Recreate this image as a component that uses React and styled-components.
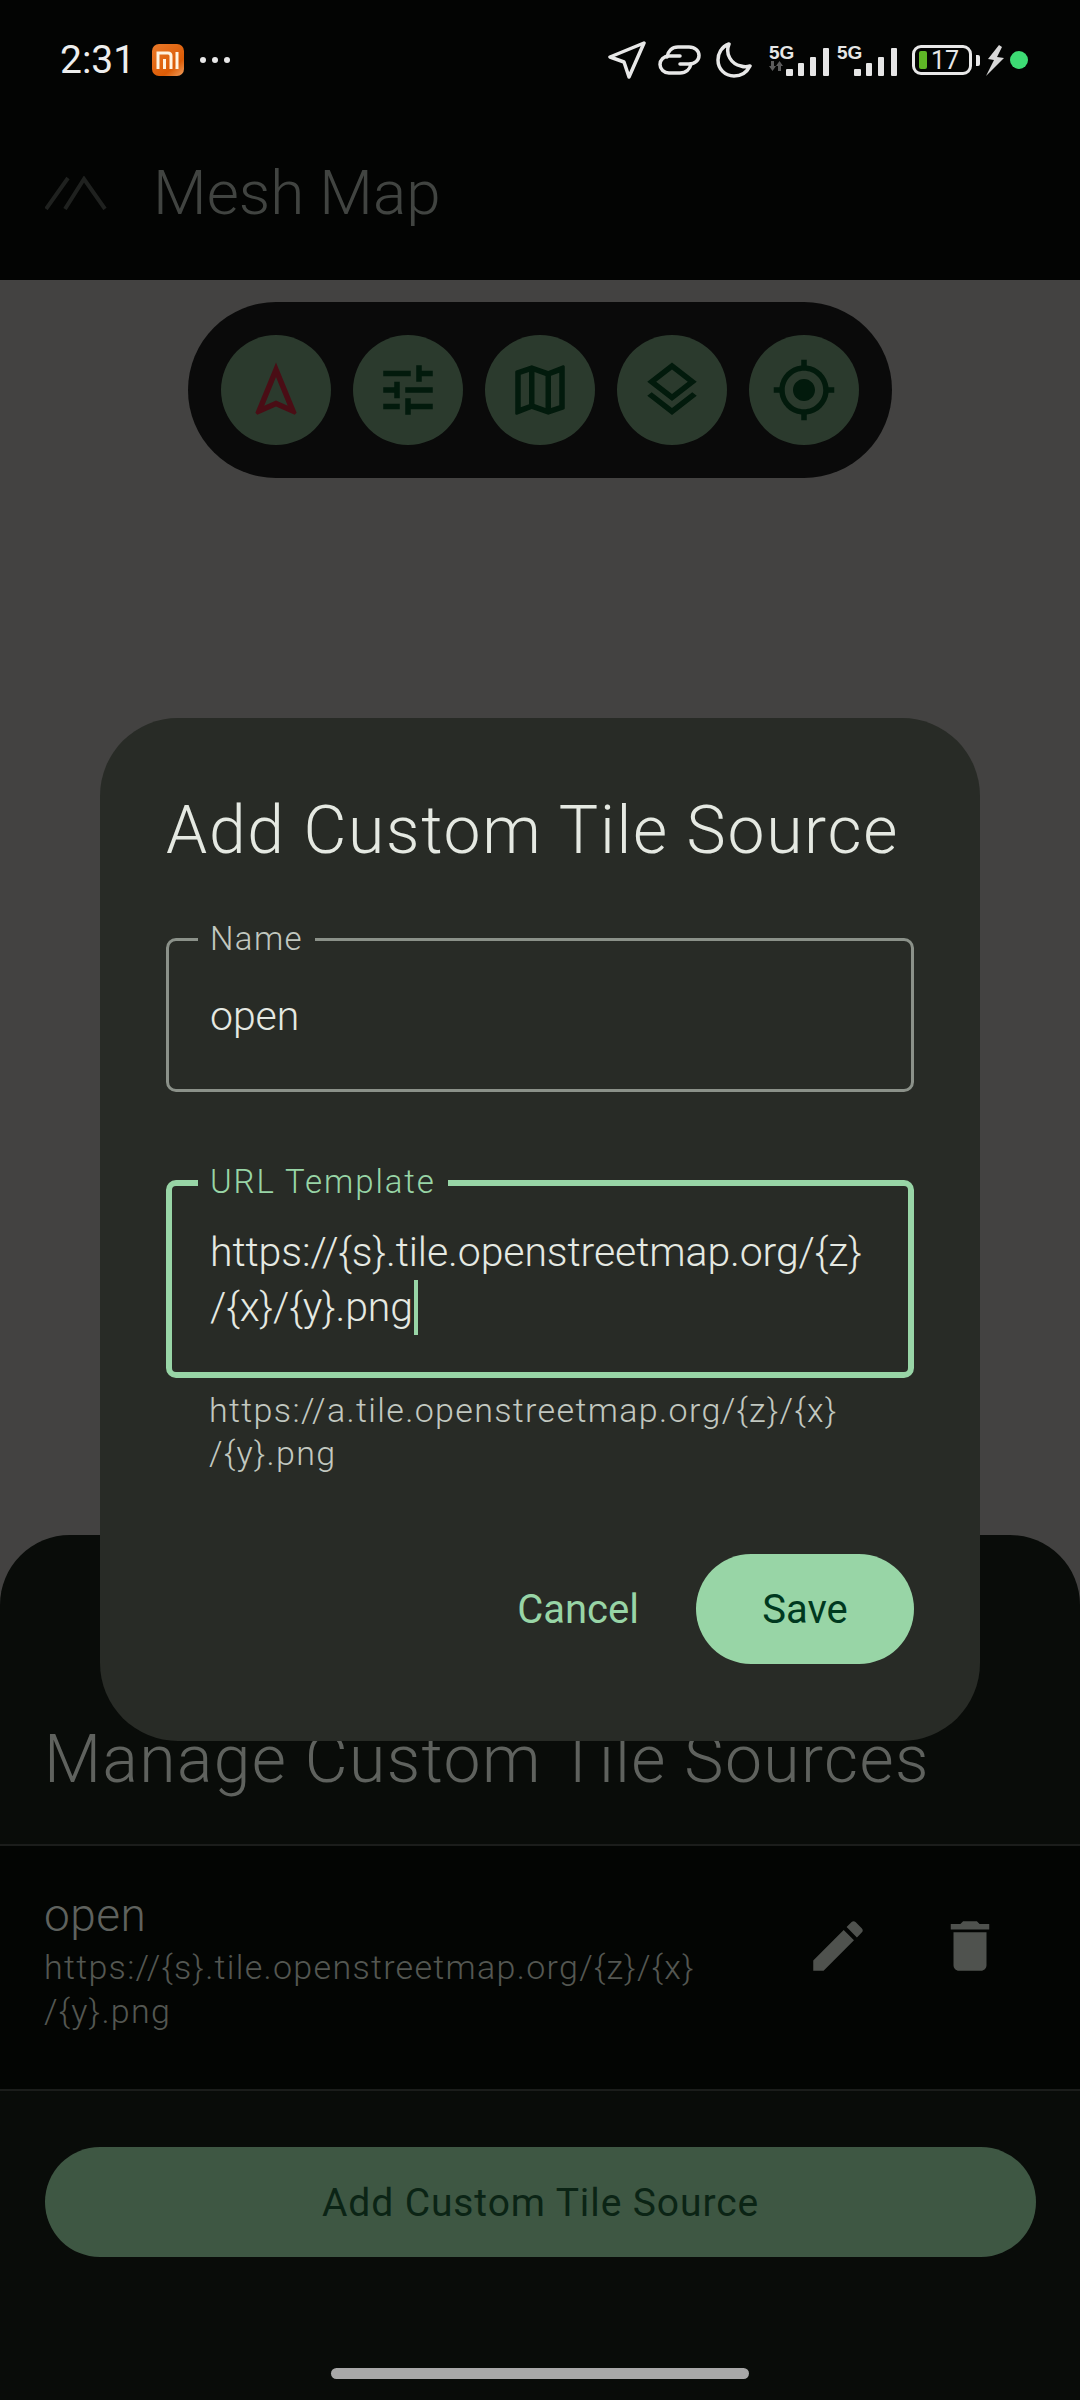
import React from 'react'
import styled, { createGlobalStyle } from 'styled-components'

const GlobalStyle = createGlobalStyle`
    html, body {
        margin: 0;
        padding: 0;
        background: #434241;
    }
    * {
        box-sizing: border-box;
    }
`

const Page = styled.div`
    position: relative;
    width: 1080px;
    height: 2400px;
    display: flex;
    flex-direction: column;
    overflow: hidden;
    font-family: Roboto, "Noto Sans", sans-serif;
    font-weight: 300;
    background: #434241;
`

const Header = styled.header`
    height: 280px;
    background: #030403;
    display: flex;
    flex-direction: column;
`

const StatusBar = styled.div`
    height: 120px;
    display: flex;
    align-items: center;
    justify-content: space-between;
    padding: 0 52px 0 60px;
`

const StatusLeft = styled.div`
    display: flex;
    align-items: center;
`

const Clock = styled.span`
    font-size: 39px;
    font-weight: 400;
    color: #eeeeee;
    margin-right: 17px;
`

const MiBadge = styled.span`
    width: 32px;
    height: 32px;
    border-radius: 7px;
    background: linear-gradient(140deg, #e9792a, #dc5c06 70%, #f0a060);
    display: flex;
    align-items: center;
    justify-content: center;
`

const Dots = styled.div`
    display: flex;
    gap: 6px;
    margin-left: 16px;
`

const Dot = styled.span`
    width: 6px;
    height: 6px;
    border-radius: 50%;
    background: #e8e8e8;
`

const StatusRight = styled.div`
    display: flex;
    align-items: center;
`

const Spacer = styled.span`
    width: ${p => p.$w}px;
`

const SignalGroup = styled.div`
    display: flex;
    align-items: flex-end;
    height: 32px;
    margin-left: ${p => p.$gap}px;
`

const SignalLabel = styled.div`
    width: 30px;
    height: 32px;
    display: flex;
    flex-direction: column;
    font-family: "Liberation Sans", sans-serif;
    font-size: 19px;
    font-weight: 700;
    line-height: 17px;
    color: #e6e6e6;
    margin-right: -13px;
`

const Battery = styled.div`
    width: 60px;
    height: 30px;
    margin-left: 14px;
    border: 3px solid #e8e8e8;
    border-radius: 9px;
    display: flex;
    align-items: center;
    padding-left: 4px;
`

const BatteryFill = styled.span`
    width: 8px;
    height: 18px;
    border-radius: 2px;
    background: #5fb526;
`

const BatteryText = styled.span`
    margin-left: 4px;
    font-size: 25px;
    font-weight: 400;
    color: #e8e8e8;
`

const BatteryNub = styled.span`
    width: 4px;
    height: 11px;
    margin-left: 4px;
    border-radius: 0 2px 2px 0;
    background: #e8e8e8;
`

const GreenDot = styled.span`
    width: 18px;
    height: 18px;
    margin-left: 6px;
    border-radius: 50%;
    background: #3ddc74;
`

const TopBar = styled.div`
    flex: 1;
    display: flex;
    align-items: center;
    padding: 0 0 15px 45px;
`

const AppTitle = styled.h1`
    margin: 0 0 0 45px;
    font-size: 62px;
    font-weight: 300;
    color: #414441;
`

const MapArea = styled.div`
    flex: 1;
    display: flex;
    justify-content: center;
    padding-top: 22px;
`

const Toolbar = styled.div`
    width: 704px;
    height: 176px;
    border-radius: 88px;
    background: #0a0a0a;
    display: flex;
    align-items: center;
    justify-content: center;
    gap: 22px;
`

const ToolButton = styled.div`
    width: 110px;
    height: 110px;
    border-radius: 50%;
    background: #2b3a2d;
    display: flex;
    align-items: center;
    justify-content: center;
    color: ${p => p.$color || '#021a0c'};
`

const Sheet = styled.section`
    height: 865px;
    border-radius: 70px 70px 0 0;
    background: #090c09;
    display: flex;
    flex-direction: column;
`

const SheetTitle = styled.h2`
    height: 311px;
    margin: 0;
    padding: 186px 0 0 44px;
    font-size: 66px;
    font-weight: 300;
    line-height: 78px;
    letter-spacing: 1.4px;
    color: #5f625e;
    border-bottom: 2px solid #1b1d1b;
`

const SourceRow = styled.div`
    height: 245px;
    padding: 34px 44px 0 44px;
    display: flex;
    align-items: flex-start;
    background: #030503;
    border-bottom: 2px solid #1b1d1b;
`

const SourceText = styled.div`
    flex: 1;
    padding-top: 6px;
`

const SourceName = styled.div`
    font-size: 46px;
    line-height: 59px;
    letter-spacing: 0.5px;
    color: #5f625e;
`

const SourceUrl = styled.div`
    font-size: 34px;
    line-height: 44px;
    letter-spacing: 1.3px;
    color: #545752;
`

const RowIcon = styled.div`
    width: 132px;
    height: 132px;
    display: flex;
    align-items: center;
    justify-content: center;
    color: #4f524e;
`

const AddButton = styled.div`
    height: 110px;
    margin: 56px 44px 0 45px;
    padding-top: 2px;
    border-radius: 55px;
    background: #3e5743;
    display: flex;
    align-items: center;
    justify-content: center;
    font-size: 39px;
    font-weight: 400;
    letter-spacing: 0.9px;
    color: #0b2415;
`

const HomeBar = styled.div`
    width: 418px;
    height: 11px;
    margin: 111px auto 0;
    border-radius: 6px;
    background: #a8a8a8;
`

const Dialog = styled.div`
    position: absolute;
    left: 100px;
    top: 718px;
    width: 880px;
    height: 1023px;
    padding: 69px 66px 0;
    border-radius: 78px;
    background: #282b26;
    display: flex;
    flex-direction: column;
`

const DialogTitle = styled.h2`
    margin: 0 0 63px;
    font-size: 66px;
    font-weight: 300;
    line-height: 88px;
    letter-spacing: 1.7px;
    color: #e5e9e2;
`

const Field = styled.div`
    position: relative;
    height: ${p => p.$height}px;
    margin-bottom: ${p => p.$gap}px;
    padding: ${p => p.$pad}px ${p => (p.$focused ? 38 : 41)}px 0;
    border: ${p => (p.$focused ? '6px solid #98d5a6' : '3px solid #8b9189')};
    border-radius: 10px;
    font-size: 41px;
    line-height: 55px;
    letter-spacing: -0.1px;
    color: #e5e9e2;
`

const FieldLabel = styled.span`
    position: absolute;
    left: ${p => (p.$focused ? 26 : 29)}px;
    top: ${p => (p.$focused ? -24 : -22)}px;
    padding: 0 12px;
    background: #282b26;
    font-size: 33px;
    line-height: 40px;
    letter-spacing: ${p => (p.$focused ? 1.9 : 1.4)}px;
    color: ${p => (p.$focused ? '#98d5a6' : '#c2c8c0')};
`

const Caret = styled.span`
    display: inline-block;
    width: 4px;
    height: 55px;
    margin-left: 1px;
    vertical-align: -14px;
    background: #98d5a6;
`

const Helper = styled.div`
    padding: 0 0 0 43px;
    margin-top: -77px;
    font-size: 34px;
    line-height: 43px;
    letter-spacing: 1.35px;
    color: #c2c8c0;
`

const Actions = styled.div`
    display: flex;
    align-items: center;
    justify-content: flex-end;
    margin-top: 79px;
`

const TextButton = styled.div`
    margin-right: 57px;
    font-size: 40px;
    font-weight: 400;
    color: #98d5a6;
`

const SaveButton = styled.div`
    width: 218px;
    height: 110px;
    border-radius: 55px;
    background: #98d5a6;
    display: flex;
    align-items: center;
    justify-content: center;
    font-size: 40px;
    font-weight: 400;
    color: #00391f;
`

const Mi = () => (
    <svg width="24" height="18" viewBox="0 0 24 18" fill="none" stroke="#fff3e0" strokeWidth="3">
        <path d="M2 18V2h10q3 0 3 3v13M8.500 8v10M21 1v17" />
    </svg>
)

const Arrow = () => (
    <svg width="38" height="38" viewBox="0 0 38 38" fill="none" stroke="#e8e8e8" strokeWidth="3.500" strokeLinejoin="round">
        <path d="M36 2L2 16l14 5 5 15z" />
    </svg>
)

const ChainLink = () => (
    <svg width="44" height="30" viewBox="0 0 44 30" fill="none" stroke="#e8e8e8" strokeWidth="3.500" strokeLinecap="round">
        <path d="M9 12C10 6 14 2 20 2h11c6 0 10 4 10 8.500s-4 8.500-10 8.500h-9" />
        <path d="M22 11H11c-5 0-9 4-9 8.500S6 28 11 28h11c6 0 10-4 11-9" />
    </svg>
)

const Moon = () => (
    <svg width="36" height="36" viewBox="0 0 36 36" fill="none" stroke="#e8e8e8" strokeWidth="3.500" strokeLinejoin="round">
        <path d="M13 2C5 5 2 12 2 18c0 9 7 16 16 16 7 0 13-4 16-10-3 1-6 1-9 0C15 22 9 12 13 2z" />
    </svg>
)

const Bars = () => (
    <svg width="44" height="28" viewBox="0 0 44 28" fill="#e6e6e6">
        <rect x="0" y="21" width="7" height="7" rx="1" />
        <rect x="12" y="15" width="6" height="13" rx="1" />
        <rect x="24" y="9" width="6" height="19" rx="1" />
        <rect x="37" y="0" width="6" height="28" rx="1" />
    </svg>
)

const TransferArrows = () => (
    <svg width="14" height="10" viewBox="0 0 14 10" fill="#5c5c5c">
        <path d="M2 0h3v5h2l-3.500 5L0 5h2zM9 10h3V5h2l-3.500-5L7 5h2z" />
    </svg>
)

const Bolt = () => (
    <svg width="18" height="31" viewBox="0 0 18 31" fill="#d8d8d8">
        <path d="M13 0L2 14l6 1-8 16 18-18-7-1 5-10z" />
    </svg>
)

const Logo = () => (
    <svg width="63" height="34" viewBox="0 0 63 34" fill="none" stroke="#1f211f" strokeWidth="4">
        <path d="M1 33L23 2M20 33L39 3l21 30" />
    </svg>
)

const Icon = ({ d }) => (
    <svg width="66" height="66" viewBox="0 0 24 24" fill="currentColor">
        <path d={d} />
    </svg>
)

const icons = {
    navigation: 'M12 7.270l4.280 10.430-3.470-1.530-.81-.36-.81.36-3.470 1.530L12 7.270M12 2L4.500 20.290l.71.71L12 18l6.790 3 .71-.71L12 2z',
    tune: 'M3 17v2h6v-2H3zM3 5v2h10V5H3zm10 16v-2h8v-2h-8v-2h-2v6h2zM7 9v2H3v2h4v2h2V9H7zm14 4v-2H11v2h10zm-6-4h2V7h4V5h-4V3h-2v6z',
    map: 'M20.500 3l-.16.03L15 5.100 9 3 3.360 4.900c-.21.07-.36.25-.36.48V20.500c0 .28.22.5.5.5l.16-.03L9 18.900l6 2.100 5.640-1.900c.21-.07.36-.25.36-.48V3.500c0-.28-.22-.5-.5-.5zM10 5.470l4 1.400v11.660l-4-1.400V5.470zm-5 .99l3-1.010v11.700l-3 1.160V6.460zm14 11.080l-3 1.010V6.860l3-1.160v11.840z',
    layers: 'M11.990 18.540l-7.370-5.730L3 14.070l9 7 9-7-1.630-1.270-7.380 5.740zM12 16l7.360-5.730L21 9l-9-7-9 7 1.630 1.270L12 16zm0-11.470L17.740 9 12 13.470 6.260 9 12 4.530z',
    location: 'M12 8c-2.210 0-4 1.790-4 4s1.790 4 4 4 4-1.790 4-4-1.790-4-4-4zm8.940 3c-.46-4.170-3.770-7.480-7.940-7.940V1h-2v2.060C6.830 3.520 3.520 6.830 3.060 11H1v2h2.060c.46 4.170 3.770 7.480 7.940 7.940V23h2v-2.060c4.170-.46 7.480-3.770 7.940-7.940H23v-2h-2.060zM12 19c-3.870 0-7-3.130-7-7s3.130-7 7-7 7 3.130 7 7-3.130 7-7 7z',
    edit: 'M3 17.250V21h3.750L17.810 9.940l-3.750-3.750L3 17.250zM20.710 7.040c.39-.39.39-1.020 0-1.410l-2.340-2.340c-.39-.39-1.020-.39-1.410 0l-1.830 1.830 3.750 3.750 1.830-1.830z',
    trash: 'M6 19c0 1.100.9 2 2 2h8c1.100 0 2-.9 2-2V7H6v12zM19 4h-3.500l-1-1h-5l-1 1H5v2h14V4z',
}

const Signal = ({ gap, arrows }) => (
    <SignalGroup $gap={gap}>
        <SignalLabel>
            5G
            {arrows && <TransferArrows />}
        </SignalLabel>
        <Bars />
    </SignalGroup>
)

export default function App() {
    return (
        <Page>
            <GlobalStyle />
            <Header>
                <StatusBar>
                    <StatusLeft>
                        <Clock>2:31</Clock>
                        <MiBadge><Mi /></MiBadge>
                        <Dots><Dot /><Dot /><Dot /></Dots>
                    </StatusLeft>
                    <StatusRight>
                        <Arrow />
                        <Spacer $w={12} />
                        <ChainLink />
                        <Spacer $w={14} />
                        <Moon />
                        <Signal gap={17} arrows />
                        <Signal gap={7} />
                        <Battery>
                            <BatteryFill />
                            <BatteryText>17</BatteryText>
                        </Battery>
                        <BatteryNub />
                        <Spacer $w={6} />
                        <Bolt />
                        <GreenDot />
                    </StatusRight>
                </StatusBar>
                <TopBar>
                    <Logo />
                    <AppTitle>Mesh Map</AppTitle>
                </TopBar>
            </Header>
            <MapArea>
                <Toolbar>
                    <ToolButton $color="#4a0d15"><Icon d={icons.navigation} /></ToolButton>
                    <ToolButton><Icon d={icons.tune} /></ToolButton>
                    <ToolButton><Icon d={icons.map} /></ToolButton>
                    <ToolButton><Icon d={icons.layers} /></ToolButton>
                    <ToolButton><Icon d={icons.location} /></ToolButton>
                </Toolbar>
            </MapArea>
            <Sheet>
                <SheetTitle>Manage Custom Tile Sources</SheetTitle>
                <SourceRow>
                    <SourceText>
                        <SourceName>open</SourceName>
                        <SourceUrl>
                            https://{'{s}'}.tile.openstreetmap.org/{'{z}'}/{'{x}'}<br />/{'{y}'}.png
                        </SourceUrl>
                    </SourceText>
                    <RowIcon><Icon d={icons.edit} /></RowIcon>
                    <RowIcon><Icon d={icons.trash} /></RowIcon>
                </SourceRow>
                <AddButton>Add Custom Tile Source</AddButton>
                <HomeBar />
            </Sheet>
            <Dialog>
                <DialogTitle>Add Custom Tile Source</DialogTitle>
                <Field $height={154} $gap={88} $pad={48}>
                    <FieldLabel>Name</FieldLabel>
                    open
                </Field>
                <Field $height={198} $gap={88} $pad={39} $focused>
                    <FieldLabel $focused>URL Template</FieldLabel>
                    https://{'{s}'}.tile.openstreetmap.org/{'{z}'}<br />/{'{x}'}/{'{y}'}.png<Caret />
                </Field>
                <Helper>
                    https://a.tile.openstreetmap.org/{'{z}'}/{'{x}'}<br />/{'{y}'}.png
                </Helper>
                <Actions>
                    <TextButton>Cancel</TextButton>
                    <SaveButton>Save</SaveButton>
                </Actions>
            </Dialog>
        </Page>
    )
}
